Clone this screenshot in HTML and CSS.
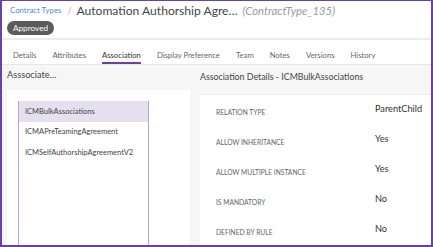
FILE: index.html
```html
<!DOCTYPE html>
<html>
<head>
<meta charset="utf-8">
<link rel="stylesheet" href="styles.css">
</head>
<body>
<div class="frame">
  <header class="header">
    <div class="crumbs">
      <span class="crumb-link">Contract Types</span>
      <span class="crumb-sep">/</span>
      <span class="title">Automation Authorship Agre…</span>
      <span class="code">(ContractType_135)</span>
    </div>
    <span class="badge">Approved</span>
  </header>
  <nav class="tabs">
    <span class="tab">Details</span>
    <span class="tab">Attributes</span>
    <span class="tab active">Association</span>
    <span class="tab">Display Preference</span>
    <span class="tab">Team</span>
    <span class="tab">Notes</span>
    <span class="tab">Versions</span>
    <span class="tab">History</span>
  </nav>
  <main class="content">
    <section class="left">
      <h2 class="heading">Asssociate…</h2>
      <div class="panel left-panel">
        <ul class="list">
          <li class="item selected">ICMBulkAssociations</li>
          <li class="item">ICMAPreTeamingAgreement</li>
          <li class="item">ICMSelfAuthorshipAgreementV2</li>
        </ul>
      </div>
    </section>
    <section class="right">
      <h2 class="heading heading-right">Association Details - ICMBulkAssociations</h2>
      <div class="panel right-panel">
        <div class="row"><span class="label">Relation Type</span><span class="value">ParentChild</span></div>
        <div class="row"><span class="label">Allow Inheritance</span><span class="value">Yes</span></div>
        <div class="row"><span class="label">Allow Multiple Instance</span><span class="value">Yes</span></div>
        <div class="row"><span class="label">Is Mandatory</span><span class="value">No</span></div>
        <div class="row"><span class="label">Defined By Rule</span><span class="value">No</span></div>
      </div>
    </section>
  </main>
</div>
</body>
</html>
```
FILE: styles.css
```css
* { box-sizing: border-box; margin: 0; padding: 0; }
html, body { width: 433px; height: 247px; overflow: hidden; background: #fff; }
body { font-family: "Lato", "Liberation Sans", sans-serif; color: #333; }

.frame {
  width: 433px;
  height: 247px;
  border: 2px solid #6a3fb1;
  border-top-width: 1px;
  display: flex;
  flex-direction: column;
  overflow: hidden;
}

.header {
  flex: 0 0 39px;
  padding-left: 5px;
  border-bottom: 2px solid #ececec;
  display: flex;
  flex-direction: column;
  align-items: flex-start;
}
.crumbs {
  display: flex;
  align-items: center;
  height: 18px;
  padding-left: 3px;
  white-space: nowrap;
}
.crumb-link { font-size: 7.8px; color: #4a8ad6; }
.crumb-sep { font-size: 9px; color: #aaa; margin: 0 5px 0 6px; }
.title { font-size: 12.1px; color: #444; }
.code { font-size: 11.3px; color: #9a9a9a; font-style: italic; margin-left: 5px; }
.badge {
  margin-top: 2px;
  background: #5b5b5b;
  color: #fff;
  font-size: 8.2px;
  height: 14px;
  line-height: 14px;
  padding: 0 6px;
  border-radius: 7px;
}

.tabs {
  flex: 0 0 25px;
  display: flex;
  gap: 16px;
  padding-left: 11px;
  border-bottom: 1px solid #e6e6e6;
  align-items: stretch;
}
.tab {
  font-size: 7.7px;
  color: #666;
  display: flex;
  align-items: center;
  padding-top: 7px;
  border-bottom: 2px solid transparent;
  white-space: nowrap;
}
.tab.active { color: #333; border-bottom-color: #6b3fa8; }

.content {
  flex: 1 1 0;
  background: #f6f6f6;
  display: flex;
  gap: 10px;
  padding-left: 5px;
  min-height: 0;
  overflow: hidden;
}
.heading {
  flex: 0 0 25px;
  font-weight: normal;
  font-size: 9.2px;
  color: #444;
  line-height: 20px;
  white-space: nowrap;
}
.heading-right { flex-basis: 29px; line-height: 24px; font-size: 8.8px; }
.left { width: 183px; display: flex; flex-direction: column; min-height: 0; }
.right { flex: 1; display: flex; flex-direction: column; min-height: 0; }
.panel { background: #fff; flex: 1 1 0; min-height: 0; overflow: hidden; }
.left-panel { padding: 11px 0 0 11px; }
.list {
  list-style: none;
  width: 131px;
  height: 200px;
  border: 1px solid #b9a2de;
  border-top: none;
}
.item { font-size: 7.5px; color: #444; height: 20.5px; line-height: 20.5px; padding-left: 6px; white-space: nowrap; }
.item.selected { background: #e6dff0; height: 21px; line-height: 21px; }

.right-panel { border-top: 1px solid #eee; padding: 8px 0 0 16px; }
.row { display: flex; height: 30px; }
.label {
  width: 159px;
  font-size: 6.7px;
  color: #666;
  text-transform: uppercase;
  padding-top: 5px;
  white-space: nowrap;
}
.value { font-size: 9.2px; color: #333; }
```
